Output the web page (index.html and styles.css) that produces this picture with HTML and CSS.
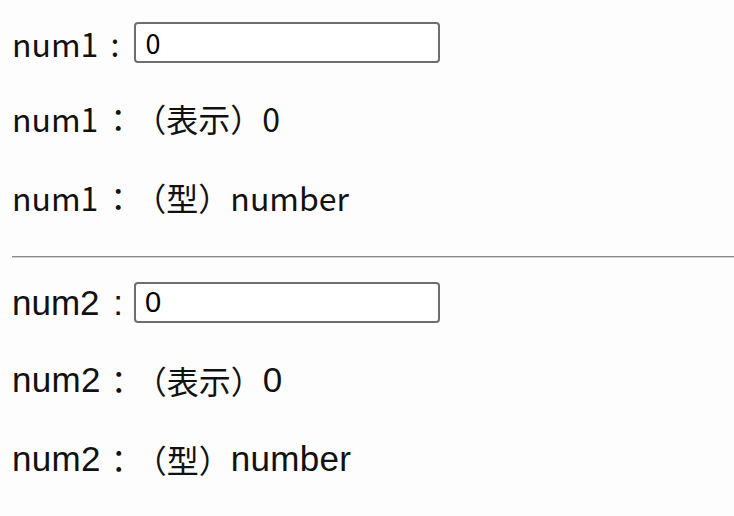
FILE: index.html
```html
<!DOCTYPE html>
<html lang="ja">
<head>
<meta charset="utf-8">
<link rel="stylesheet" href="styles.css">
</head>
<body>
<div class="page">
  <div class="block">
    <div class="row row-a"><label class="lbl" for="n1">num1 :</label><input id="n1" class="field" type="text" value="0"></div>
    <div class="row row-a text"><span class="key">num1</span><span class="jp">：（表示）</span>0</div>
    <div class="row row-a text"><span class="key">num1</span><span class="jp">：（型）</span>number</div>
  </div>
  <hr class="rule">
  <div class="block">
    <div class="row row-b"><label class="lbl" for="n2">num2 :</label><input id="n2" class="field field-b" type="text" value="0"></div>
    <div class="row row-b text"><span class="key">num2</span><span class="jp">：（表示）</span>0</div>
    <div class="row row-b text"><span class="key">num2</span><span class="jp">：（型）</span>number</div>
  </div>
</div>
</body>
</html>
```

FILE: styles.css
```css
html, body {
  margin: 0;
  padding: 0;
  background: #fdfdfd;
  overflow: hidden;
}
.page {
  padding: 22px 0 0 12px;
  color: #111;
}
.block {
  display: flex;
  flex-direction: column;
  gap: 38px;
}
.row {
  box-sizing: border-box;
  height: 41px;
  display: flex;
  align-items: center;
  white-space: nowrap;
  text-spacing-trim: space-all;
  font-kerning: none;
}
.row-a {
  font-family: "Noto Sans CJK JP", "Liberation Sans", sans-serif;
  font-size: 32px;
}
.row-a.text {
  padding-bottom: 8px;
}
.row-b {
  font-family: "Liberation Sans", "Noto Sans CJK JP", sans-serif;
  font-size: 35px;
}
.row-b.text {
  padding-bottom: 3px;
  letter-spacing: 0.3px;
}
.row-a .key {
  padding-right: 4px;
}
.row-b .key {
  padding-right: 2px;
}
.jp {
  font-family: "Noto Sans CJK JP", sans-serif;
  font-size: 32px;
  letter-spacing: 0;
}
.lbl {
  word-spacing: 5px;
  margin-right: 15px;
}
.row-b .lbl {
  word-spacing: 4px;
  margin-right: 11px;
}
.field {
  box-sizing: border-box;
  width: 306px;
  height: 41px;
  border: 2px solid #6e6e6e;
  border-radius: 4px;
  padding: 0 9px;
  font-family: "Noto Sans CJK JP", sans-serif;
  font-size: 27px;
  color: #000;
  background: #fff;
  outline: none;
}
.field-b {
  font-family: "Liberation Sans Narrow", "Liberation Sans", sans-serif;
  font-size: 29px;
}
.rule {
  margin: 35px 0 24px 0;
  height: 0;
  border: 0;
  border-top: 1px solid #8a8a8a;
  border-bottom: 1px solid #d2d2d2;
}
```
